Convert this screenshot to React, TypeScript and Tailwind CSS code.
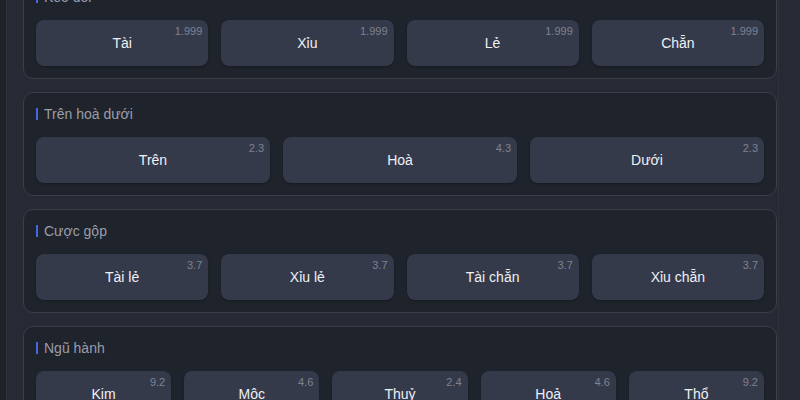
import React from 'react';

interface Bet {
  label: string;
  odds: string;
}

interface Group {
  title: string;
  cols: string;
  bets: Bet[];
}

const groups: Group[] = [
  {
    title: 'Kèo đôi',
    cols: 'grid-cols-4',
    bets: [
      { label: 'Tài', odds: '1.999' },
      { label: 'Xỉu', odds: '1.999' },
      { label: 'Lẻ', odds: '1.999' },
      { label: 'Chẵn', odds: '1.999' },
    ],
  },
  {
    title: 'Trên hoà dưới',
    cols: 'grid-cols-3',
    bets: [
      { label: 'Trên', odds: '2.3' },
      { label: 'Hoà', odds: '4.3' },
      { label: 'Dưới', odds: '2.3' },
    ],
  },
  {
    title: 'Cược gộp',
    cols: 'grid-cols-4',
    bets: [
      { label: 'Tài lẻ', odds: '3.7' },
      { label: 'Xỉu lẻ', odds: '3.7' },
      { label: 'Tài chẵn', odds: '3.7' },
      { label: 'Xỉu chẵn', odds: '3.7' },
    ],
  },
  {
    title: 'Ngũ hành',
    cols: 'grid-cols-5',
    bets: [
      { label: 'Kim', odds: '9.2' },
      { label: 'Mộc', odds: '4.6' },
      { label: 'Thuỷ', odds: '2.4' },
      { label: 'Hoả', odds: '4.6' },
      { label: 'Thổ', odds: '9.2' },
    ],
  },
];

const BetButton: React.FC<Bet> = ({ label, odds }) => (
  <button className="relative h-[46px] rounded-lg bg-[#353a4b] text-[14px] text-[#eef0f4] shadow-[0_1px_2px_rgba(0,0,0,0.3)]">
    {label}
    <span className="absolute right-[6px] top-[4px] text-[11px] leading-[14px] text-[#7d8291]">
      {odds}
    </span>
  </button>
);

export default function App() {
  return (
    <div
      className="flex h-[400px] w-[800px] overflow-hidden bg-[#272a34]"
      style={{ fontFamily: '"Liberation Sans", Arial, sans-serif' }}
    >
      {/* left rail */}
      <div className="w-[7px] shrink-0 border-r border-[#30343e] bg-[#1f2229]" />

      <div className="-mt-[25px] ml-[16px] flex w-[754px] shrink-0 flex-col gap-[13px]">
        {groups.map((group) => (
          <div
            key={group.title}
            className="rounded-[10px] border border-[#3a3e49] bg-[#1f232b] px-[12px] pb-[12px] pt-[12px]"
          >
            <div className="mb-[14px] flex h-[18px] items-center gap-[6px]">
              <span className="h-[12px] w-[2px] bg-[#4866e0]" />
              <span className="text-[14px] text-[#9a9eaa]">{group.title}</span>
            </div>
            <div className={`grid ${group.cols} gap-[13px]`}>
              {group.bets.map((bet) => (
                <BetButton key={bet.label} {...bet} />
              ))}
            </div>
          </div>
        ))}
      </div>

      <div className="ml-px w-px shrink-0 bg-[#2d313b]" />
    </div>
  );
}
